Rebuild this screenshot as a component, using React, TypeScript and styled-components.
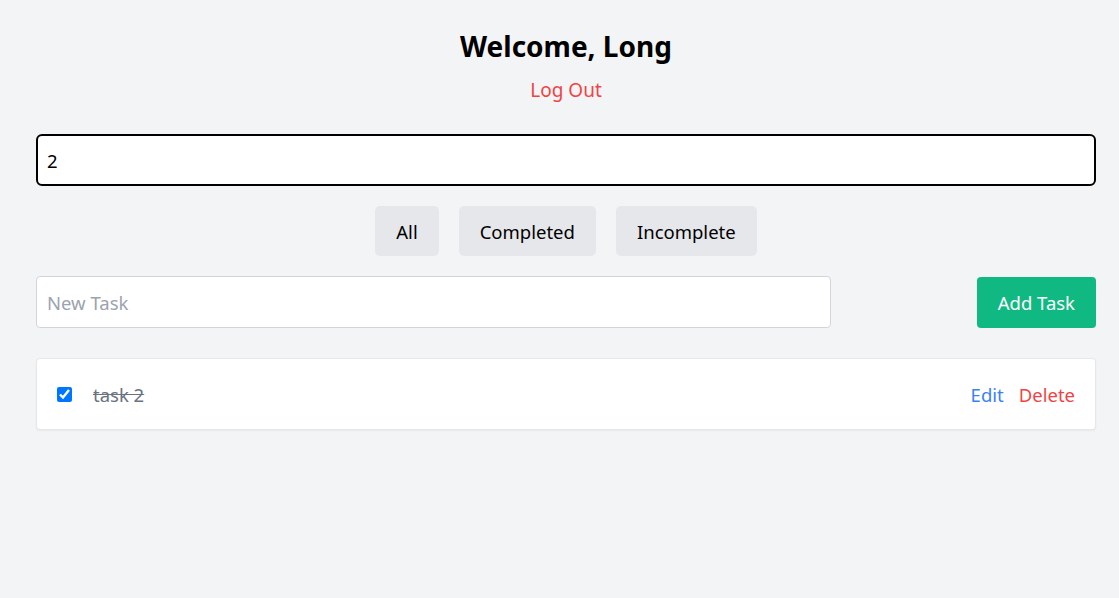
import React, { useState } from "react";
import styled, { createGlobalStyle } from "styled-components";

const Global = createGlobalStyle`
  html, body { margin: 0; padding: 0; background: #f3f4f6; }
  body { font-family: "Noto Sans", "Open Sans", sans-serif; color: #000; }
  * { box-sizing: border-box; }
`;

const Page = styled.div`
  min-height: 598px;
  background: #f3f4f6;
  padding: 28px 23px 0 36px;
  display: flex;
  flex-direction: column;
`;

const Header = styled.header`
  display: flex;
  flex-direction: column;
  align-items: center;
`;

const Title = styled.h1`
  margin: 0;
  font-size: 28px;
  font-weight: 700;
  line-height: 36px;
`;

const LogOut = styled.button`
  margin-top: 13px;
  background: none;
  border: none;
  padding: 0;
  font: inherit;
  font-size: 19px;
  line-height: 26px;
  color: #ef4444;
  cursor: pointer;
`;

const Search = styled.input`
  margin-top: 31px;
  width: 100%;
  height: 52px;
  border: 2px solid #000;
  border-radius: 6px;
  padding: 0 9px;
  font: inherit;
  font-size: 18.5px;
  outline: none;
  background: #fff;
`;

const Filters = styled.div`
  margin-top: 20px;
  display: flex;
  justify-content: center;
  gap: 20px;
`;

const FilterButton = styled.button`
  height: 50px;
  padding: 0 21px;
  background: #e5e7eb;
  border: none;
  border-radius: 5px;
  font: inherit;
  font-size: 18.5px;
  color: #000;
  cursor: pointer;
`;

const AddRow = styled.form`
  margin-top: 20px;
  display: flex;
  justify-content: space-between;
  align-items: center;
`;

const NewTask = styled.input`
  width: 75%;
  height: 52px;
  border: 1px solid #d1d5db;
  border-radius: 4px;
  padding: 0 10px;
  font: inherit;
  font-size: 18.5px;
  background: #fff;
  outline: none;
  &::placeholder { color: #9ca3af; }
`;

const AddButton = styled.button`
  height: 51px;
  padding: 0 21px;
  background: #10b981;
  color: #fff;
  border: none;
  border-radius: 4px;
  font: inherit;
  font-size: 18.5px;
  cursor: pointer;
`;

const List = styled.ul`
  list-style: none;
  margin: 30px 0 0;
  padding: 0;
`;

const Item = styled.li`
  height: 72px;
  background: #fff;
  border: 1px solid #e5e7eb;
  border-radius: 4px;
  box-shadow: 0 1px 2px rgba(0, 0, 0, 0.05);
  display: flex;
  align-items: center;
  justify-content: space-between;
  padding: 0 20px 0 20px;
`;

const Left = styled.div`
  display: flex;
  align-items: center;
  gap: 21px;
`;

const Check = styled.input`
  width: 15px;
  height: 15px;
  margin: 0;
  accent-color: #0075ff;
`;

const TaskText = styled.span<{ $done: boolean }>`
  font-size: 18.5px;
  color: ${(p) => (p.$done ? "#6b7280" : "#000")};
  text-decoration: ${(p) => (p.$done ? "line-through" : "none")};
`;

const Actions = styled.div`
  display: flex;
  gap: 15px;
`;

const ActionLink = styled.button<{ $tone: "blue" | "red" }>`
  background: none;
  border: none;
  padding: 0;
  font: inherit;
  font-size: 18.5px;
  color: ${(p) => (p.$tone === "blue" ? "#3b82f6" : "#ef4444")};
  cursor: pointer;
`;

export default function App() {
  const [search, setSearch] = useState("2");
  const [done, setDone] = useState(true);
  return (
    <Page>
      <Global />
      <Header>
        <Title>Welcome, Long</Title>
        <LogOut>Log Out</LogOut>
      </Header>
      <Search value={search} onChange={(e) => setSearch(e.target.value)} />
      <Filters>
        <FilterButton>All</FilterButton>
        <FilterButton>Completed</FilterButton>
        <FilterButton>Incomplete</FilterButton>
      </Filters>
      <AddRow onSubmit={(e) => e.preventDefault()}>
        <NewTask placeholder="New Task" />
        <AddButton type="submit">Add Task</AddButton>
      </AddRow>
      <List>
        <Item>
          <Left>
            <Check type="checkbox" checked={done} onChange={() => setDone(!done)} />
            <TaskText $done={done}>task 2</TaskText>
          </Left>
          <Actions>
            <ActionLink $tone="blue">Edit</ActionLink>
            <ActionLink $tone="red">Delete</ActionLink>
          </Actions>
        </Item>
      </List>
    </Page>
  );
}
